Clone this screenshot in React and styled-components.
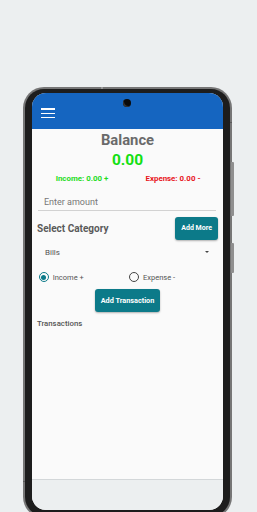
import React from "react";
import styled, { createGlobalStyle } from "styled-components";

const Global = createGlobalStyle`
  html, body {
    margin: 0;
    padding: 0;
    background: #eceff0;
    overflow: hidden;
    font-family: Roboto, "Noto Sans", Arial, sans-serif;
  }
  * { box-sizing: border-box; }
`;

const Stage = styled.div`
  width: 257px;
  height: 512px;
  padding: 86.7px 0 0 23.3px;
`;

const Phone = styled.div`
  position: relative;
  width: 208.4px;
  background: #767676;
  border-radius: 21px;
  padding: 2px;
`;

const Bezel = styled.div`
  background: #1d1d1d;
  border-radius: 19px;
  padding: 4px 6.4px 6px 6.4px;
`;

const SideKey = styled.div`
  position: absolute;
  right: -2.6px;
  top: ${(p) => p.$top}px;
  width: 2.8px;
  height: ${(p) => p.$h}px;
  background: #8f8f8f;
  border-radius: 0 1px 1px 0;
`;

const Tick = styled.div`
  position: absolute;
  background: #5a5a5a;
  ${(p) => p.$css}
`;

const Screen = styled.div`
  position: relative;
  height: 417.5px;
  border-radius: 14px;
  overflow: hidden;
  display: flex;
  flex-direction: column;
  background: #fafafa;
`;

const Camera = styled.div`
  position: absolute;
  top: 6.3px;
  left: 50%;
  width: 8px;
  height: 8px;
  margin-left: -4px;
  border-radius: 50%;
  background: #0a0a0a;
  box-shadow: inset 1.5px -1.5px 0 -0.5px #333;
`;

const AppBar = styled.div`
  height: 36.5px;
  flex: none;
  background: #1565c0;
  padding: 15.8px 0 0 9.3px;
`;

const Burger = styled.div`
  display: flex;
  flex-direction: column;
  gap: 2.6px;
  width: 14px;
`;

const BurgerLine = styled.span`
  display: block;
  height: 1.5px;
  background: #ffffff;
`;

const Body = styled.div`
  flex: 1;
  display: flex;
  flex-direction: column;
  background: #fafafa;
  padding-top: 2px;
`;

const Title = styled.div`
  text-align: center;
  font-size: 14.8px;
  line-height: 18px;
  font-weight: 700;
  color: #6a6a6a;
`;

const BalanceValue = styled.div`
  text-align: center;
  font-size: 15.5px;
  line-height: 20px;
  margin-top: 1px;
  font-weight: 700;
  color: #12e012;
`;

const Totals = styled.div`
  display: grid;
  grid-template-columns: 1fr 1fr;
  justify-items: center;
  padding: 0 4.8px;
  margin-top: 3.5px;
`;

const Total = styled.span`
  font-size: 7.9px;
  line-height: 10px;
  font-weight: 700;
  color: ${(p) => p.$color};
`;

const AmountInput = styled.input`
  display: block;
  margin: 7px 7.3px 0 6.3px;
  height: 20px;
  padding: 3px 0 0 6px;
  border: none;
  border-bottom: 1.5px solid #d2d2d2;
  background: transparent;
  font-family: inherit;
  font-size: 9px;
  color: #333;
  outline: none;
  &::placeholder { color: #777; }
`;

const CategoryRow = styled.div`
  display: flex;
  align-items: center;
  justify-content: space-between;
  padding: 0 5px 0 5.3px;
  margin-top: 6.3px;
`;

const SectionLabel = styled.span`
  font-size: ${(p) => p.$size}px;
  font-weight: ${(p) => p.$weight};
  color: #5a5a5a;
  line-height: 1.2;
  padding-top: 2px;
`;

const Button = styled.button`
  width: ${(p) => p.$w}px;
  height: 23px;
  padding: 0;
  border: none;
  border-radius: 3px;
  background: #0c7a89;
  color: #ffffff;
  font-family: inherit;
  font-size: ${(p) => p.$size}px;
  font-weight: 700;
  box-shadow: 0 1px 2px rgba(0, 0, 0, 0.3);
`;

const Select = styled.div`
  display: flex;
  align-items: center;
  justify-content: space-between;
  height: 16px;
  margin-top: 4.5px;
  padding: 0 14.6px 0 13.3px;
  font-size: 8px;
  color: #555;
`;

const Caret = styled.span`
  width: 0;
  height: 0;
  border-left: 2.6px solid transparent;
  border-right: 2.6px solid transparent;
  border-top: 2.6px solid #444;
`;

const RadioRow = styled.div`
  display: grid;
  grid-template-columns: 90.3px 1fr;
  align-items: center;
  height: 14px;
  margin-top: 10px;
  padding-left: 7.3px;
`;

const RadioItem = styled.label`
  display: flex;
  align-items: center;
  gap: 3.7px;
  font-size: 7.5px;
  color: #555;
`;

const RadioCircle = styled.span`
  width: 10px;
  height: 10px;
  border-radius: 50%;
  border: 1.3px solid ${(p) => (p.$checked ? "#0c7a89" : "#444")};
  display: flex;
  align-items: center;
  justify-content: center;
  &::after {
    content: "";
    width: 5px;
    height: 5px;
    border-radius: 50%;
    background: ${(p) => (p.$checked ? "#0c7a89" : "transparent")};
  }
`;

const Center = styled.div`
  display: flex;
  justify-content: center;
  margin-top: 5px;
`;

const TransactionsLabel = styled.div`
  margin-top: 7px;
  padding-left: 5.3px;
  font-size: 7.8px;
  line-height: 10px;
  font-weight: 500;
  color: #555;
`;

const NavBar = styled.div`
  height: 31px;
  flex: none;
  background: #eceff0;
  border-top: 1px solid #d3d7d9;
`;

export default function App() {
  return (
    <>
      <Global />
      <Stage>
        <Phone>
          <SideKey $top={75} $h={54} />
          <SideKey $top={156} $h={30} />
          <Tick $css="left: 78px; top: 0; width: 1.5px; height: 2px; background:#9a9a9a;" />
          <Tick $css="right: 0; top: 35px; width: 2px; height: 1.5px;" />
          <Tick $css="left: 0; top: 394px; width: 2px; height: 1.5px;" />
          <Bezel>
            <Screen>
              <Camera />
              <AppBar>
                <Burger>
                  <BurgerLine />
                  <BurgerLine />
                  <BurgerLine />
                </Burger>
              </AppBar>
              <Body>
                <Title>Balance</Title>
                <BalanceValue>0.00</BalanceValue>
                <Totals>
                  <Total $color="#1fdc1f">Income: 0.00 +</Total>
                  <Total $color="#e8141b">Expense: 0.00 -</Total>
                </Totals>
                <AmountInput placeholder="Enter amount" />
                <CategoryRow>
                  <SectionLabel $size={10} $weight={700}>Select Category</SectionLabel>
                  <Button $w={43.3} $size={7}>Add More</Button>
                </CategoryRow>
                <Select>
                  <span>Bills</span>
                  <Caret />
                </Select>
                <RadioRow>
                  <RadioItem>
                    <RadioCircle $checked />
                    Income +
                  </RadioItem>
                  <RadioItem>
                    <RadioCircle />
                    Expense -
                  </RadioItem>
                </RadioRow>
                <Center>
                  <Button $w={64.3} $size={7.3}>Add Transaction</Button>
                </Center>
                <TransactionsLabel>Transactions</TransactionsLabel>
              </Body>
              <NavBar />
            </Screen>
          </Bezel>
        </Phone>
      </Stage>
    </>
  );
}
